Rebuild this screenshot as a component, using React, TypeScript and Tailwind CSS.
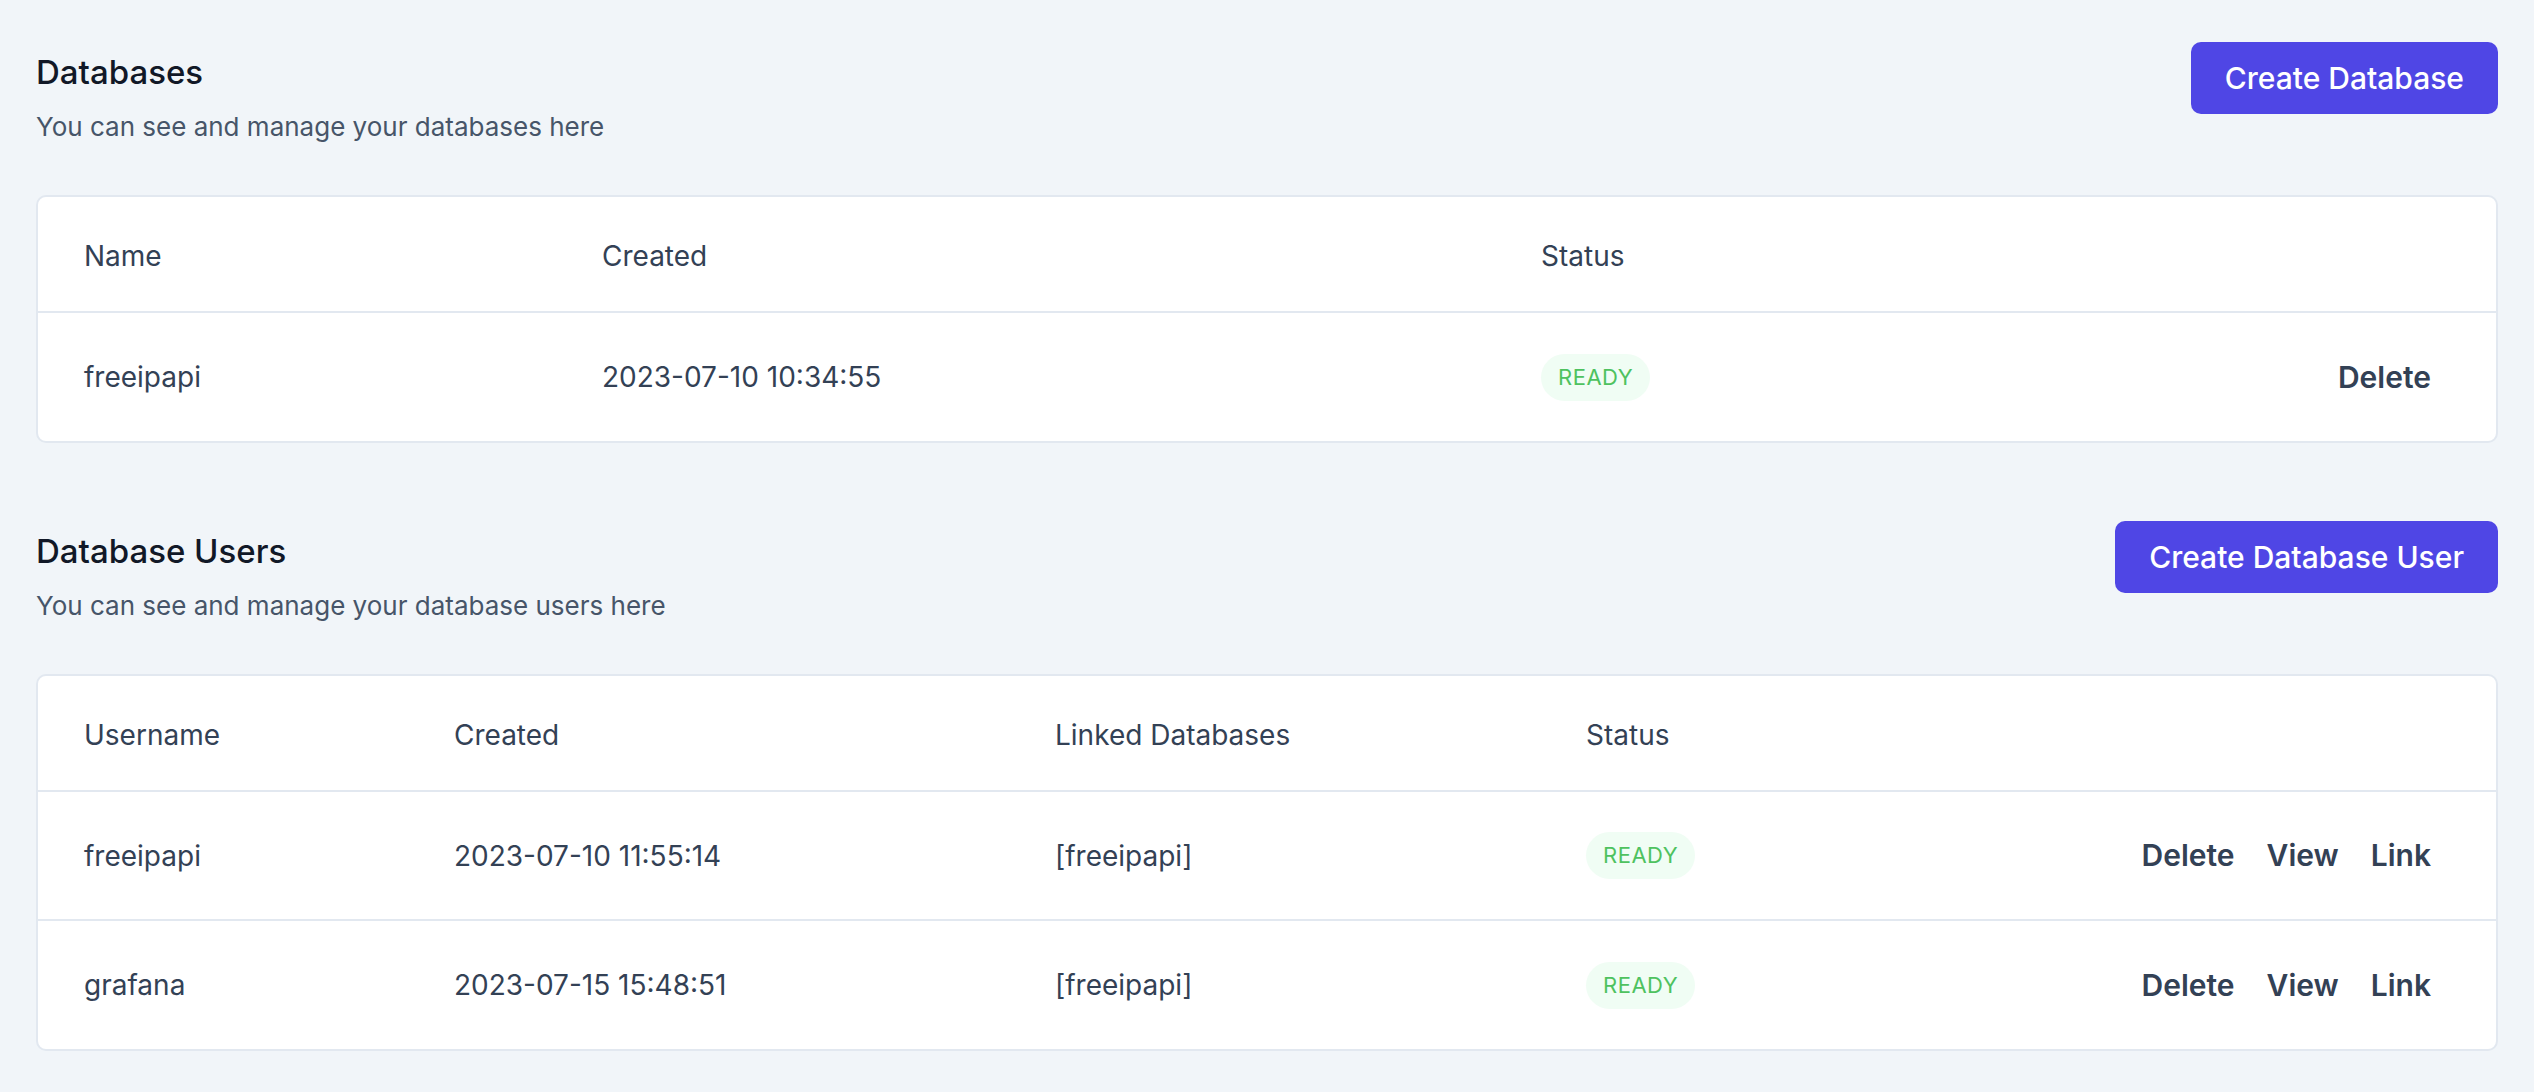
import React from 'react';

const databases = [
  { name: 'freeipapi', created: '2023-07-10 10:34:55', status: 'READY' },
];

const dbUsers = [
  { username: 'freeipapi', created: '2023-07-10 11:55:14', linked: '[freeipapi]', status: 'READY' },
  { username: 'grafana', created: '2023-07-15 15:48:51', linked: '[freeipapi]', status: 'READY' },
];

function StatusBadge({ status }: { status: string }) {
  return (
    <span className="inline-flex items-center h-[47px] px-[17px] rounded-full bg-[#f0fdf4] text-[#4ec25f] text-[22px] tracking-[0.5px]">
      {status}
    </span>
  );
}

function SectionHeader({ title, subtitle, action }: { title: string; subtitle: string; action: string }) {
  return (
    <div className="flex items-start justify-between">
      <div className="pt-[8px]">
        <h2 className="text-[33px] leading-[44px] font-medium text-[#111827]">{title}</h2>
        <p className="mt-[15px] text-[26px] leading-[36px] text-[#475569]">{subtitle}</p>
      </div>
      <button className="h-[72px] px-[34px] rounded-[10px] bg-[#4f46e5] text-white text-[30px] font-medium">
        {action}
      </button>
    </div>
  );
}

export default function App() {
  return (
    <div
      className="min-h-screen bg-[#f1f5f9] px-[36px] pt-[42px] pb-[40px] text-[#334155]"
      style={{ fontFamily: 'Inter, "Noto Sans", sans-serif' }}
    >
      {/* Databases */}
      <section>
        <SectionHeader
          title="Databases"
          subtitle="You can see and manage your databases here"
          action="Create Database"
        />
        <div className="mt-[50px] bg-white border-2 border-[#e2e8f0] rounded-[10px] overflow-hidden">
          <table className="w-full table-fixed text-[28px]">
            <colgroup>
              <col className="w-[518px]" />
              <col className="w-[939px]" />
              <col className="w-[478px]" />
              <col />
            </colgroup>
            <thead>
              <tr className="border-b-2 border-[#e2e8f0]">
                <th className="h-[115px] pl-[46px] pt-[4px] text-left font-normal">Name</th>
                <th className="pl-[46px] pt-[4px] text-left font-normal">Created</th>
                <th className="pl-[46px] pt-[4px] text-left font-normal">Status</th>
                <th></th>
              </tr>
            </thead>
            <tbody>
              {databases.map((db) => (
                <tr key={db.name}>
                  <td className="h-[129px] pl-[46px]">{db.name}</td>
                  <td className="pl-[46px]">{db.created}</td>
                  <td className="pl-[46px]">
                    <StatusBadge status={db.status} />
                  </td>
                  <td className="pr-[65px] text-right text-[30px] font-semibold">
                    <button>Delete</button>
                  </td>
                </tr>
              ))}
            </tbody>
          </table>
        </div>
      </section>

      {/* Database Users */}
      <section className="mt-[78px]">
        <SectionHeader
          title="Database Users"
          subtitle="You can see and manage your database users here"
          action="Create Database User"
        />
        <div className="mt-[50px] bg-white border-2 border-[#e2e8f0] rounded-[10px] overflow-hidden">
          <table className="w-full table-fixed text-[28px]">
            <colgroup>
              <col className="w-[370px]" />
              <col className="w-[601px]" />
              <col className="w-[531px]" />
              <col className="w-[312px]" />
              <col />
            </colgroup>
            <thead>
              <tr className="border-b-2 border-[#e2e8f0]">
                <th className="h-[115px] pl-[46px] pt-[4px] text-left font-normal">Username</th>
                <th className="pl-[46px] pt-[4px] text-left font-normal">Created</th>
                <th className="pl-[46px] pt-[4px] text-left font-normal">Linked Databases</th>
                <th className="pl-[46px] pt-[4px] text-left font-normal">Status</th>
                <th></th>
              </tr>
            </thead>
            <tbody>
              {dbUsers.map((u, i) => (
                <tr key={u.username} className={i < dbUsers.length - 1 ? 'border-b-2 border-[#e2e8f0]' : ''}>
                  <td className="h-[129px] pl-[46px]">{u.username}</td>
                  <td className="pl-[46px]">{u.created}</td>
                  <td className="pl-[46px]">{u.linked}</td>
                  <td className="pl-[46px]">
                    <StatusBadge status={u.status} />
                  </td>
                  <td className="pr-[65px]">
                    <div className="flex justify-end gap-[32px] text-[30px] font-semibold">
                      <button>Delete</button>
                      <button>View</button>
                      <button>Link</button>
                    </div>
                  </td>
                </tr>
              ))}
            </tbody>
          </table>
        </div>
      </section>
    </div>
  );
}
